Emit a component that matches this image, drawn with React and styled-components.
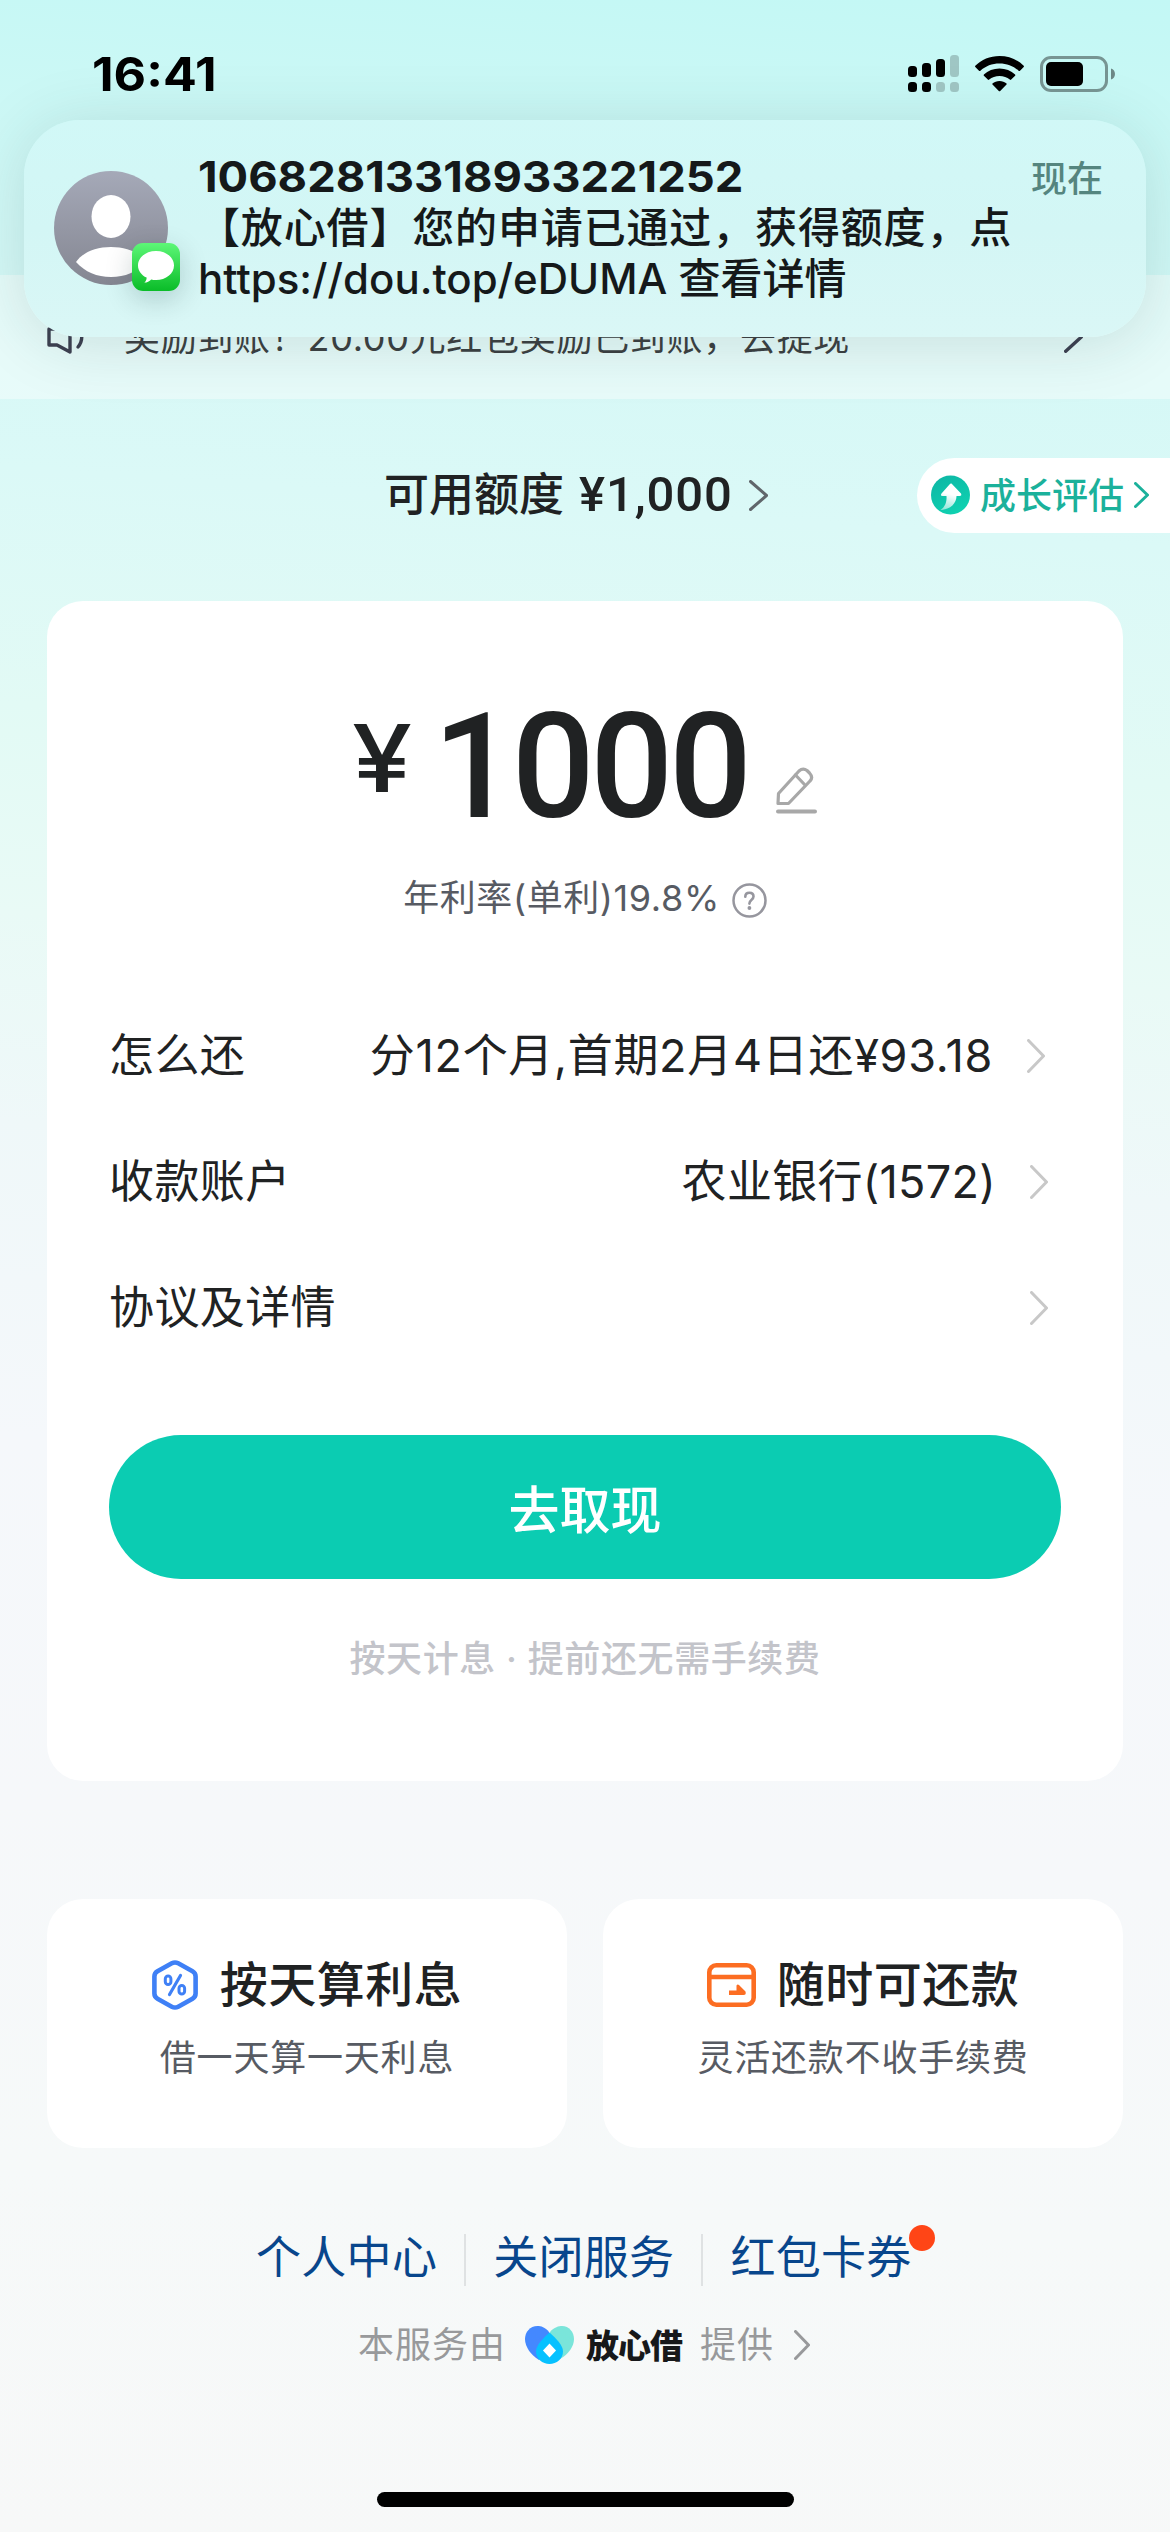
import React from "react";
import styled, { createGlobalStyle } from "styled-components";

const GlobalStyle = createGlobalStyle`
  * {
    box-sizing: border-box;
  }

  body {
    margin: 0;
    font-family: Inter, "Noto Sans CJK SC", sans-serif;
    color: #202223;
  }
`;

const Chevron = ({ w, h, color, stroke = 3 }) => (
  <svg width={w} height={h} viewBox={`0 0 ${w} ${h}`} fill="none">
    <path
      d={`M${stroke / 2} ${stroke / 2}L${w - stroke / 2} ${h / 2}L${stroke / 2} ${h - stroke / 2}`}
      stroke={color}
      strokeWidth={stroke}
      strokeLinecap="round"
      strokeLinejoin="round"
    />
  </svg>
);

const SignalIcon = () => (
  <svg width="51" height="37" viewBox="0 0 51 37">
    <rect x="0" y="11" width="9" height="11" rx="3.5" />
    <rect x="14" y="8" width="9" height="14" rx="3.5" />
    <rect x="28" y="4" width="9" height="18" rx="3.5" />
    <rect x="42" y="0" width="9" height="22" rx="3.5" opacity="0.2" />
    <rect x="0" y="27" width="9" height="10" rx="3.5" />
    <rect x="14" y="27" width="9" height="10" rx="3.5" />
    <rect x="28" y="27" width="9" height="10" rx="3.5" opacity="0.2" />
    <rect x="42" y="27" width="9" height="10" rx="3.5" opacity="0.2" />
  </svg>
);

const WifiIcon = () => (
  <svg width="49" height="36" viewBox="0 0 49 36">
    <path d="M24.5 0C34 0 42.6 3.700 48.700 9.800Q49.200 10.400 48.700 11L45 14.800Q44.300 15.400 43.600 14.800C38.600 10 31.900 7.500 24.500 7.500S10.400 10 5.400 14.800Q4.700 15.400 4 14.800L.3 11Q-.2 10.400 .3 9.800C6.400 3.700 15 0 24.500 0Z" />
    <path d="M24.500 12.500C30.600 12.500 36 14.700 40.100 18.500Q40.700 19.200 40.100 19.800L36.200 23.600Q35.500 24.200 34.800 23.600C32 21.200 28.500 19.900 24.500 19.900S17 21.200 14.200 23.600Q13.500 24.200 12.800 23.600L8.900 19.800Q8.300 19.200 8.900 18.500C13 14.700 18.400 12.500 24.500 12.500Z" />
    <path d="M24.500 25C27.200 25 29.700 25.900 31.500 27.400Q32.100 28 31.500 28.600L25.200 35Q24.500 35.600 23.800 35L17.500 28.600Q16.900 28 17.500 27.400C19.300 25.900 21.800 25 24.500 25Z" />
  </svg>
);

const BatteryIcon = () => (
  <svg width="76" height="36" viewBox="0 0 76 36">
    <rect x="1.500" y="1.500" width="65" height="33" rx="9.500" fill="none" stroke="#000" strokeOpacity="0.4" strokeWidth="3" />
    <rect x="6" y="6" width="37" height="24" rx="5" />
    <path d="M71 12.500C73.500 13.200 75 15.400 75 18S73.500 22.800 71 23.500Z" opacity="0.45" />
  </svg>
);

const AvatarIcon = () => (
  <svg width="114" height="114" viewBox="0 0 114 114">
    <defs>
      <linearGradient id="avatar" x1="0" y1="0" x2="0" y2="1">
        <stop offset="0" stopColor="#a5a9b8" />
        <stop offset="1" stopColor="#848691" />
      </linearGradient>
    </defs>
    <circle cx="57" cy="57" r="57" fill="url(#avatar)" />
    <ellipse cx="57" cy="45.500" rx="19.500" ry="21.500" fill="#fff" />
    <path d="M22 91C29 81 42 76 57 76S85 81 92 91C83 101 71 106 57 106S31 101 22 91Z" fill="#fff" />
  </svg>
);

const BubbleIcon = () => (
  <svg width="36" height="33" viewBox="0 0 36 33">
    <path d="M18 0C28 0 36 6.300 36 14.400S28 29 18 29C16.300 29 14.700 28.800 13.200 28.400C11.500 30.300 9 31.500 6.300 31.600C7.800 30.300 8.700 28.600 8.600 26.600C3.400 24 0 19.600 0 14.400C0 6.300 8 0 18 0Z" fill="#fff" />
  </svg>
);

const SpeakerIcon = () => (
  <svg width="38" height="34" viewBox="0 0 38 34" fill="none" stroke="#3d3f50" strokeWidth="3.400" strokeLinejoin="round" strokeLinecap="round">
    <path d="M2 9H10L23 2V32L10 25H2Z" />
    <path d="M31 27C36 21 36 13 31 7" />
  </svg>
);

const GrowthIcon = () => (
  <svg width="39" height="40" viewBox="0 0 39 40">
    <defs>
      <linearGradient id="growth" x1="0" y1="0" x2="0.500" y2="1">
        <stop offset="0" stopColor="#0db5a4" />
        <stop offset="1" stopColor="#0fd0b0" />
      </linearGradient>
      <linearGradient id="growthArrow" x1="0.500" y1="0" x2="0.300" y2="1">
        <stop offset="0.400" stopColor="#fff" />
        <stop offset="1" stopColor="#fff" stopOpacity="0.550" />
      </linearGradient>
    </defs>
    <circle cx="19.500" cy="20" r="19.500" fill="url(#growth)" />
    <path d="M20.500 8.500L30 18.500Q31 21 28.500 21H25.500C25.500 28 20 34.500 9.500 35C14 32 16 27 15.500 21H11.500Q9 21 10.500 18.500L18.500 9.500Q19.500 8 20.500 8.500Z" fill="url(#growthArrow)" />
  </svg>
);

const PencilIcon = () => (
  <svg width="41" height="47" viewBox="0 0 41 47" fill="none" stroke="#a8a8a8" strokeWidth="3.200" strokeLinejoin="round" strokeLinecap="round">
    <path d="M2.500 26.500L23 4Q27 .5 31 3.500L33.500 6Q37.500 10.500 34 14L12.500 36.500H2Z" />
    <path d="M19.500 8L28.500 17.500" />
    <path d="M2 44.500H39" strokeWidth="4" />
  </svg>
);

const HelpIcon = () => (
  <svg width="35" height="35" viewBox="0 0 35 35" fill="none" stroke="#96969e">
    <circle cx="17.500" cy="17.500" r="16" strokeWidth="2.500" />
    <path d="M13.300 13.700C13.300 11.200 15 9.800 17.400 9.800S21.500 11.300 21.500 13.600C21.500 16.800 17.400 16.600 17.400 20.600" strokeWidth="2.600" strokeLinecap="round" />
    <circle cx="17.400" cy="25" r="1.900" fill="#96969e" stroke="none" />
  </svg>
);

const PercentIcon = () => (
  <svg width="46" height="50" viewBox="0 0 46 50" fill="none" stroke="#3f80f6">
    <path d="M19.800 3.300Q23 1.600 26.200 3.300L40.500 11.200Q43.600 13 43.600 16.400V33.600Q43.600 37 40.500 38.800L26.200 46.700Q23 48.400 19.800 46.700L5.500 38.800Q2.400 37 2.400 33.600V16.400Q2.400 13 5.500 11.200Z" strokeWidth="4.600" />
    <path d="M28.500 15.500L17.500 34.500" strokeWidth="3.200" strokeLinecap="round" />
    <rect x="13.300" y="16" width="5.600" height="8.500" rx="2.800" strokeWidth="3" />
    <rect x="27" y="25.500" width="5.600" height="8.500" rx="2.800" strokeWidth="3" />
  </svg>
);

const WalletIcon = () => (
  <svg width="49" height="44" viewBox="0 0 49 44" fill="none" stroke="#fc6d22" strokeWidth="4.600">
    <rect x="2.300" y="2.300" width="44.400" height="39.400" rx="7" />
    <path d="M2 14H47" />
    <path d="M22 27.600H29.500V22.500Q30.500 21 32 22L38.500 28.500Q39.500 32 36.500 32H22Z" fill="#fc6d22" stroke="none" />
  </svg>
);

const HeartLogo = () => (
  <svg width="49" height="38" viewBox="0 0 49 38">
    <path d="M25 6C29 1 34 0 37 0C44 0 49 6 49 13C49 20 44 28 35 33L25 20Z" fill="#7ae5da" />
    <path d="M24 6C20 1 16 0 12.500 0C5 0 0 6 0 13C0 21 6 29 14 34L28 20Z" fill="#4488ff" />
    <path d="M24.500 6.500C31 12.500 38 19 38 25.500C38 33 31.500 38 24.500 38S11 33 11 25.500C11 19 18 12.500 24.500 6.500Z" fill="#06c1ff" />
    <path d="M24.500 17.500L31 24.500L24.500 31.500L18 24.500Z" fill="#fff" />
  </svg>
);

const rows = [
  { label: "怎么还", value: "分12个月,首期2月4日还¥93.18", spacing: "0.7px", end: 16 },
  { label: "收款账户", value: "农业银行(1572)", spacing: "0.3px", end: 13 },
  { label: "协议及详情", value: "", end: 13 },
];

const features = [
  { title: "按天算利息", text: "借一天算一天利息", icon: <PercentIcon />, gap: 22 },
  { title: "随时可还款", text: "灵活还款不收手续费", icon: <WalletIcon />, gap: 21 },
];

const App = () => {
  return (
    <Page>
      <GlobalStyle />

      <StatusBar>
        <Time>16:41</Time>
        <StatusIcons>
          <SignalIcon />
          <WifiIcon />
          <BatteryIcon />
        </StatusIcons>
      </StatusBar>

      <Notice>
        <SpeakerIcon />
        <NoticeText>奖励到账！20.00元红包奖励已到账，去提现</NoticeText>
        <Chevron w={19} h={32} color="#3d3f50" stroke={3.4} />
      </Notice>

      <Header>
        <Quota>
          可用额度 <QuotaNumber>¥1,000</QuotaNumber>
          <Chevron w={19} h={31} color="#60666b" />
        </Quota>
        <GrowthTag>
          <GrowthIcon />
          <GrowthText>成长评估</GrowthText>
          <Chevron w={15} h={26} color="#1bb19b" />
        </GrowthTag>
      </Header>

      <LoanCard>
        <Amount>
          <Currency>¥</Currency>
          <Digits>1000</Digits>
          <PencilIcon />
        </Amount>
        <Rate>
          年利率(单利)19.8%
          <HelpIcon />
        </Rate>
        <Rows>
          {rows.map((row) => (
            <Row key={row.label} $end={row.end}>
              <RowLabel>{row.label}</RowLabel>
              <RowValue $spacing={row.spacing}>{row.value}</RowValue>
              <Chevron w={18} h={34} color="#c8c8c8" />
            </Row>
          ))}
        </Rows>
        <CashButton>去取现</CashButton>
        <Hint>按天计息 · 提前还无需手续费</Hint>
      </LoanCard>

      <Features>
        {features.map((item) => (
          <Feature key={item.title}>
            <FeatureHead $gap={item.gap}>
              {item.icon}
              <FeatureTitle>{item.title}</FeatureTitle>
            </FeatureHead>
            <FeatureText>{item.text}</FeatureText>
          </Feature>
        ))}
      </Features>

      <Links>
        <LinkItem>个人中心</LinkItem>
        <LinkItem>关闭服务</LinkItem>
        <LinkItem>
          红包卡券
          <Dot />
        </LinkItem>
      </Links>

      <Provider>
        <ProviderText>本服务由</ProviderText>
        <HeartLogo />
        <Brand>放心借</Brand>
        <ProviderText>提供</ProviderText>
        <Chevron w={16} h={30} color="#98999b" />
      </Provider>

      <HomeIndicator />

      <Notification>
        <Avatar>
          <AvatarIcon />
          <AppBadge>
            <BubbleIcon />
          </AppBadge>
        </Avatar>
        <Message>
          <Sender>10682813318933221252</Sender>
          <MessageLine $spacing="0.85px">【放心借】您的申请已通过，获得额度，点</MessageLine>
          <MessageLine>https://dou.top/eDUMA 查看详情</MessageLine>
        </Message>
        <Now>现在</Now>
      </Notification>
    </Page>
  );
};

const Page = styled.div`
  position: relative;
  display: flex;
  flex-direction: column;
  width: 1170px;
  height: 2532px;
  overflow: hidden;
  background: linear-gradient(
    4deg,
    #f7f8f8 0%,
    #f6f9f9 14%,
    #f6f8fa 28%,
    #f5f8fb 42%,
    #eff8f9 54%,
    #e9faf6 62%,
    #e2faf5 70%,
    #dbf9f7 79%,
    #d5f8f6 86%,
    #c3f8f5 100%
  );

  svg {
    display: block;
    flex-shrink: 0;
  }
`;

const StatusBar = styled.div`
  display: flex;
  justify-content: space-between;
  align-items: flex-start;
  height: 275px;
  padding: 46px 54px 0 92px;
`;

const Time = styled.div`
  font-size: 46px;
  line-height: 56px;
  font-weight: 700;
  color: #000;
  transform: scaleX(1.09);
  transform-origin: left;
`;

const StatusIcons = styled.div`
  display: flex;
  align-items: center;
  gap: 16px;
  padding-top: 9px;
`;

const Notice = styled.div`
  display: flex;
  align-items: center;
  height: 124px;
  padding: 0 87px 0 47px;
  background: rgba(255, 255, 255, 0.4);
  color: #3c3f41;
`;

const NoticeText = styled.div`
  flex: 1;
  margin-left: 39px;
  padding-bottom: 5px;
  font-size: 36px;
  letter-spacing: 0.7px;
  white-space: nowrap;
`;

const Header = styled.div`
  display: flex;
  align-items: center;
  justify-content: space-between;
  height: 202px;
  padding: 0 0 10px 384px;
`;

const Quota = styled.div`
  display: flex;
  align-items: center;
  font-size: 45px;
  line-height: 60px;
  font-weight: 500;
`;

const QuotaNumber = styled.span`
  margin: 0 16px 0 15px;
  font-family: Roboto, sans-serif;
  font-size: 49px;
  letter-spacing: 0.9px;
`;

const GrowthTag = styled.div`
  display: flex;
  align-items: center;
  width: 253px;
  height: 75px;
  padding-left: 14px;
  border-radius: 38px 0 0 38px;
  background: #fff;
  color: #1bb19b;
`;

const GrowthText = styled.span`
  margin: 0 10px;
  padding-bottom: 5px;
  font-size: 36px;
  font-weight: 500;
`;

const LoanCard = styled.div`
  display: flex;
  flex-direction: column;
  height: 1180px;
  margin: 0 47px;
  padding: 94px 62px 0;
  border-radius: 36px;
  background: #fff;
`;

const Amount = styled.div`
  display: flex;
  align-items: flex-start;
  height: 146px;
  padding-left: 243px;

  svg {
    margin: 72px 0 0 28px;
  }
`;

const Currency = styled.span`
  width: 62px;
  margin-top: 17px;
  font-size: 93px;
  line-height: 93px;
  font-weight: 500;
  transform: scaleX(1.16);
  transform-origin: left;
`;

const Digits = styled.span`
  margin-left: 19px;
  font-family: Roboto, sans-serif;
  font-size: 146px;
  line-height: 146px;
  font-weight: 500;
  letter-spacing: -4.3px;
`;

const Rate = styled.div`
  display: flex;
  align-items: center;
  justify-content: center;
  gap: 12px;
  height: 60px;
  margin-top: 24px;
  font-size: 36px;
  letter-spacing: 0.6px;
  color: #575b63;

  svg {
    margin-top: 10px;
  }
`;

const Rows = styled.div`
  margin-top: 68px;
`;

const Row = styled.div`
  display: flex;
  align-items: center;
  height: 126px;
  padding: 0 ${({ $end }) => $end}px 0 0;
  font-size: 45px;
  letter-spacing: 0.4px;
`;

const RowLabel = styled.span`
  padding-bottom: 8px;
`;

const RowValue = styled.span`
  flex: 1;
  padding: 0 34px 8px 0;
  text-align: right;
  letter-spacing: ${({ $spacing }) => $spacing};
`;

const CashButton = styled.button`
  height: 144px;
  margin-top: 64px;
  border: none;
  border-radius: 72px;
  background: #0bccb2;
  color: #fff;
  font-family: inherit;
  font-size: 51px;
  font-weight: 500;
`;

const Hint = styled.div`
  margin-top: 53px;
  text-align: center;
  font-size: 36px;
  line-height: 54px;
  font-weight: 500;
  letter-spacing: 0.6px;
  color: #c3c4ca;
`;

const Features = styled.div`
  display: grid;
  grid-template-columns: 1fr 1fr;
  gap: 36px;
  margin: 118px 47px 0;
`;

const Feature = styled.div`
  display: flex;
  flex-direction: column;
  align-items: center;
  height: 249px;
  padding-top: 50px;
  border-radius: 36px;
  background: #fff;
`;

const FeatureHead = styled.div`
  display: flex;
  align-items: center;
  gap: ${({ $gap }) => $gap}px;
  height: 72px;
`;

const FeatureTitle = styled.span`
  padding-bottom: 8px;
  font-size: 48px;
  font-weight: 500;
  letter-spacing: 0.5px;
`;

const FeatureText = styled.div`
  margin-top: 10px;
  font-size: 36px;
  line-height: 54px;
  letter-spacing: 0.8px;
  color: #575b63;
`;

const Links = styled.div`
  display: flex;
  align-items: center;
  height: 52px;
  margin: 86px 0 0 229px;
  font-size: 45px;
  color: #08468c;
`;

const LinkItem = styled.div`
  position: relative;
  padding: 0 27px 5px;
  line-height: 47px;
  letter-spacing: 0.3px;

  & + & {
    border-left: 2px solid #dfe2e3;
  }
`;

const Dot = styled.i`
  position: absolute;
  top: -9px;
  right: 4px;
  width: 26px;
  height: 26px;
  border-radius: 50%;
  background: #ff4516;
`;

const Provider = styled.div`
  display: flex;
  align-items: center;
  height: 54px;
  margin: 32px 0 0 358px;
  color: #98999b;

  svg:first-of-type {
    margin-left: 19px;
  }

  svg:last-of-type {
    margin-left: 20px;
  }
`;

const ProviderText = styled.span`
  padding-bottom: 6px;
  font-size: 36px;
  letter-spacing: 1px;
`;

const Brand = styled.b`
  margin: 0 18px 0 12px;
  padding-bottom: 3px;
  font-size: 33px;
  font-weight: 900;
  letter-spacing: -1px;
  color: #17181a;
`;

const HomeIndicator = styled.div`
  width: 417px;
  height: 15px;
  margin: auto auto 25px;
  border-radius: 8px;
  background: #000;
`;

const Notification = styled.div`
  position: absolute;
  top: 120px;
  left: 24px;
  display: flex;
  align-items: flex-start;
  width: 1122px;
  height: 217px;
  padding: 0 43px 0 30px;
  border-radius: 56px;
  background: linear-gradient(180deg, #d1f8f7 0%, #d3f6f5 50%, #daf7f6 100%);
  box-shadow: 0 6px 64px rgba(30, 70, 70, 0.15);
`;

const Avatar = styled.div`
  position: relative;
  margin-top: 51px;
`;

const AppBadge = styled.div`
  position: absolute;
  left: 78px;
  top: 72px;
  display: flex;
  align-items: center;
  justify-content: center;
  width: 48px;
  height: 48px;
  border-radius: 11px;
  background: linear-gradient(180deg, #5df777 0%, #0abc28 100%);
  box-shadow: 0 8px 28px rgba(0, 40, 40, 0.2);
`;

const Message = styled.div`
  flex: 1;
  margin: 31px 0 0 30px;
  color: #15191a;
  white-space: nowrap;
`;

const Sender = styled.div`
  font-size: 42px;
  line-height: 51px;
  font-weight: 700;
  transform: scaleX(1.08);
  transform-origin: left;
`;

const MessageLine = styled.div`
  font-size: 42px;
  line-height: 51px;
  font-weight: 500;
  letter-spacing: ${({ $spacing }) => $spacing || "normal"};
`;

const Now = styled.div`
  margin-top: 33px;
  font-size: 36px;
  line-height: 52px;
  font-weight: 500;
  color: #55857f;
`;

export default App;
